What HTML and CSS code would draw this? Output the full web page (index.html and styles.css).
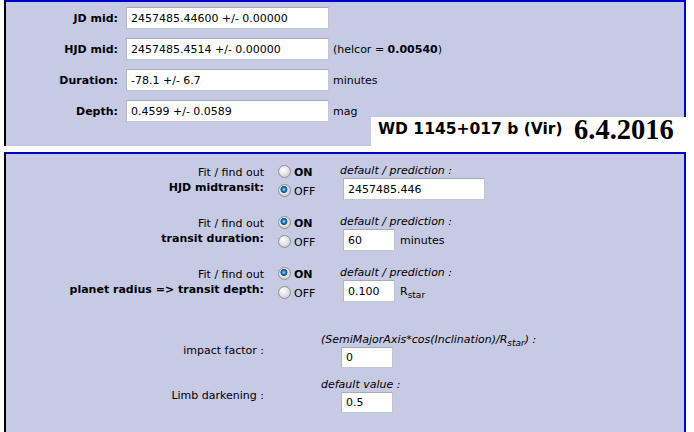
FILE: index.html
```html
<!DOCTYPE html>
<html lang="en">
<head>
    <meta charset="UTF-8">
    <title>Transit fit</title>
    <link rel="stylesheet" href="styles.css">
</head>
<body>
    <div class="page">
        <!-- result of the last fit -->
        <div class="panel result-panel">
            <div class="fields">
                <label class="field-label">JD mid:</label>
                <input type="text" class="field-input" value="2457485.44600 +/- 0.00000">
                <span class="field-unit"></span>

                <label class="field-label">HJD mid:</label>
                <input type="text" class="field-input" value="2457485.4514 +/- 0.00000">
                <span class="field-unit">(helcor = <b>0.00540</b>)</span>

                <label class="field-label">Duration:</label>
                <input type="text" class="field-input" value="-78.1 +/- 6.7">
                <span class="field-unit">minutes</span>

                <label class="field-label">Depth:</label>
                <input type="text" class="field-input" value="0.4599 +/- 0.0589">
                <span class="field-unit">mag</span>
            </div>

            <div class="target-box">
                <span class="target-name">WD 1145+017 b (Vir)</span>
                <span class="target-date">6.4.2016</span>
            </div>
        </div>

        <!-- fit options -->
        <div class="panel options-panel">
            <div class="opt-row">
                <div class="opt-label">Fit / find out<br><b>HJD midtransit:</b></div>
                <div class="opt-switch">
                    <label class="switch-line"><input type="radio" name="fit_mid" value="1"><b>ON</b></label>
                    <label class="switch-line"><input type="radio" name="fit_mid" value="0" checked>OFF</label>
                </div>
                <div class="opt-value">
                    <div class="hint">default / prediction :</div>
                    <input type="text" class="small-input wide-input" value="2457485.446">
                </div>
            </div>

            <div class="opt-row">
                <div class="opt-label">Fit / find out<br><b>transit duration:</b></div>
                <div class="opt-switch">
                    <label class="switch-line"><input type="radio" name="fit_dur" value="1" checked><b>ON</b></label>
                    <label class="switch-line"><input type="radio" name="fit_dur" value="0">OFF</label>
                </div>
                <div class="opt-value">
                    <div class="hint">default / prediction :</div>
                    <input type="text" class="small-input" value="60"><span class="unit">minutes</span>
                </div>
            </div>

            <div class="opt-row last-fit">
                <div class="opt-label">Fit / find out<br><b>planet radius =&gt; transit depth:</b></div>
                <div class="opt-switch">
                    <label class="switch-line"><input type="radio" name="fit_depth" value="1" checked><b>ON</b></label>
                    <label class="switch-line"><input type="radio" name="fit_depth" value="0">OFF</label>
                </div>
                <div class="opt-value">
                    <div class="hint">default / prediction :</div>
                    <input type="text" class="small-input" value="0.100"><span class="unit">R<sub>star</sub></span>
                </div>
            </div>

            <div class="opt-row fixed-row">
                <div class="opt-label">impact factor :</div>
                <div class="opt-fixed">
                    <div class="hint">(SemiMajorAxis*cos(Inclination)/R<sub>star</sub>) :</div>
                    <input type="text" class="small-input" value="0">
                </div>
            </div>

            <div class="opt-row fixed-row">
                <div class="opt-label">Limb darkening :</div>
                <div class="opt-fixed">
                    <div class="hint">default value :</div>
                    <input type="text" class="small-input" value="0.5">
                </div>
            </div>
        </div>
    </div>
</body>
</html>
```

FILE: styles.css
```css
body {
    margin: 0;
    font-family: "DejaVu Sans", Verdana, sans-serif;
    font-size: 11px;
    color: #000;
    background: #fff;
}

.page {
    padding-left: 4px;
    width: 682px;
}

.panel {
    background-color: #c7cae5;
    border-left: 2px solid #000;
    border-top: 2px solid #0000cc;
    border-right: 2px solid #0000cc;
}

/* top block */
.result-panel {
    position: relative;
    height: 144px;
}

.fields {
    display: grid;
    grid-template-columns: 112px 203px auto;
    column-gap: 8px;
    row-gap: 9px;
    padding-top: 5px;
    align-items: center;
}

.field-label {
    font-weight: bold;
    text-align: right;
}

.field-unit {
    margin-left: -4px;
}

input[type="text"] {
    box-sizing: border-box;
    height: 22px;
    padding: 0 4px;
    margin: 0;
    border: 1px solid #c4c6cf;
    border-top-color: #a9abb4;
    border-left-color: #b4b6bf;
    background: #fff;
    font-family: "DejaVu Sans", Verdana, sans-serif;
    font-size: 11px;
    color: #000;
}

.field-input {
    width: 203px;
}

.target-box {
    position: absolute;
    left: 365px;
    top: 115px;
    width: 315px;
    height: 29px;
    background: #fff;
    white-space: nowrap;
}

.target-name {
    position: absolute;
    left: 7px;
    top: 3px;
    font-weight: bold;
    font-size: 15.5px;
}

.target-date {
    position: absolute;
    left: 203px;
    top: -3px;
    font-family: "Liberation Serif", "Times New Roman", serif;
    font-weight: bold;
    font-size: 28.5px;
}

/* fit options */
.options-panel {
    margin-top: 6px;
    padding-top: 9px;
    padding-bottom: 40px;
}

.opt-row {
    display: grid;
    grid-template-columns: 260px 74px auto;
    margin-bottom: 13px;
}

.opt-row.last-fit {
    margin-bottom: 29px;
}

.opt-row.fixed-row {
    grid-template-columns: 260px auto;
    margin-bottom: 9px;
}

.opt-label {
    text-align: right;
    padding-right: 2px;
    padding-top: 2px;
    line-height: 15px;
}

.fixed-row .opt-label {
    align-self: center;
    padding-top: 0;
}

.opt-switch {
    line-height: 19px;
}

.switch-line {
    display: block;
    white-space: nowrap;
}

input[type="radio"] {
    appearance: none;
    -webkit-appearance: none;
    box-sizing: border-box;
    width: 13px;
    height: 13px;
    margin: 0 3px 0 12px;
    border: 1px solid #8f9091;
    border-radius: 50%;
    background: radial-gradient(circle at 40% 35%, #ffffff 0, #e6e6e6 45%, #bdbdbd 100%);
    vertical-align: -2px;
}

input[type="radio"]:checked {
    background:
        radial-gradient(circle at 45% 40%, #9fe3ff 0, #2a8cc8 1.6px, #0b4e86 3.2px, rgba(11, 78, 134, 0) 3.8px),
        radial-gradient(circle at 40% 35%, #ffffff 0, #e6e6e6 45%, #bdbdbd 100%);
}

.hint {
    font-style: italic;
    line-height: 15px;
    white-space: nowrap;
}

.opt-value .small-input {
    margin-left: 3px;
}

.small-input {
    width: 52px;
}

.wide-input {
    width: 142px;
}

.unit {
    margin-left: 5px;
}

sub {
    font-size: 9px;
    vertical-align: -3px;
    line-height: 0;
}

.opt-fixed {
    padding-left: 55px;
}

.opt-fixed .small-input {
    margin-left: 20px;
    height: 21px;
}
```
